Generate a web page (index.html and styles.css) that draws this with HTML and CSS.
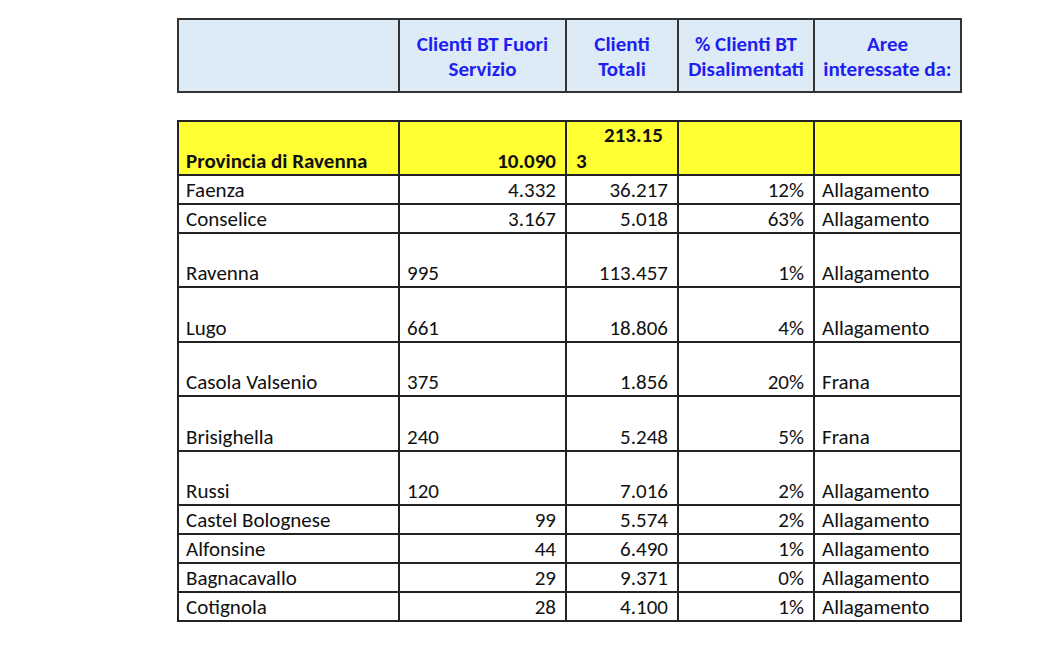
FILE: index.html
```html
<!DOCTYPE html>
<html lang="it">
<head>
<meta charset="utf-8">
<title>Clienti BT</title>
<link rel="stylesheet" href="styles.css">
</head>
<body>
<div class="page">
  <table class="grid head">
    <colgroup>
      <col class="c1"><col class="c2"><col class="c3"><col class="c4"><col class="c5">
    </colgroup>
    <tr>
      <th></th>
      <th>Clienti BT Fuori<br>Servizio</th>
      <th>Clienti<br>Totali</th>
      <th>% Clienti BT<br>Disalimentati</th>
      <th>Aree<br>interessate da:</th>
    </tr>
  </table>

  <table class="grid body">
    <colgroup>
      <col class="c1"><col class="c2"><col class="c3"><col class="c4"><col class="c5">
    </colgroup>
    <tr class="prov">
      <td class="b">Provincia di Ravenna</td>
      <td class="r b">10.090</td>
      <td class="b wrap">213.15<br>3</td>
      <td></td>
      <td></td>
    </tr>
    <tr class="short"><td>Faenza</td><td class="r">4.332</td><td class="r">36.217</td><td class="r">12%</td><td>Allagamento</td></tr>
    <tr class="short"><td>Conselice</td><td class="r">3.167</td><td class="r">5.018</td><td class="r">63%</td><td>Allagamento</td></tr>
    <tr class="tall"><td>Ravenna</td><td>995</td><td class="r">113.457</td><td class="r">1%</td><td>Allagamento</td></tr>
    <tr class="tall"><td>Lugo</td><td>661</td><td class="r">18.806</td><td class="r">4%</td><td>Allagamento</td></tr>
    <tr class="tall"><td>Casola Valsenio</td><td>375</td><td class="r">1.856</td><td class="r">20%</td><td>Frana</td></tr>
    <tr class="tall"><td>Brisighella</td><td>240</td><td class="r">5.248</td><td class="r">5%</td><td>Frana</td></tr>
    <tr class="tall"><td>Russi</td><td>120</td><td class="r">7.016</td><td class="r">2%</td><td>Allagamento</td></tr>
    <tr class="short"><td>Castel Bolognese</td><td class="r">99</td><td class="r">5.574</td><td class="r">2%</td><td>Allagamento</td></tr>
    <tr class="short"><td>Alfonsine</td><td class="r">44</td><td class="r">6.490</td><td class="r">1%</td><td>Allagamento</td></tr>
    <tr class="short"><td>Bagnacavallo</td><td class="r">29</td><td class="r">9.371</td><td class="r">0%</td><td>Allagamento</td></tr>
    <tr class="short"><td>Cotignola</td><td class="r">28</td><td class="r">4.100</td><td class="r">1%</td><td>Allagamento</td></tr>
  </table>
</div>
</body>
</html>
```

FILE: styles.css
```css
html, body {
  margin: 0;
  padding: 0;
  background: #ffffff;
}

.page {
  padding: 18px 0 0 177px;
  font-family: "Carlito", "Lato", "Liberation Sans", sans-serif;
  font-size: 21px;
  color: #111111;
}

.grid {
  border-collapse: collapse;
  table-layout: fixed;
  width: 783px;
}

.c1 { width: 221px; }
.c2 { width: 167px; }
.c3 { width: 112px; }
.c4 { width: 136px; }
.c5 { width: 147px; }

.grid th,
.grid td {
  border: 2px solid #222222;
  padding: 0 8px 0 7px;
  vertical-align: bottom;
  line-height: 25px;
  white-space: nowrap;
}

.head {
  margin-bottom: 27px;
}

.head th {
  background: #ddebf7;
  color: #1f1ff0;
  font-weight: bold;
  text-align: center;
  height: 68px;
  vertical-align: middle;
  padding: 3px 4px 0 4px;
  border-color: #333333;
}

.body td.r {
  text-align: right;
  padding-right: 9px;
}

.body .b {
  font-weight: bold;
}

.prov td {
  background: #ffff33;
  height: 52px;
}

.prov td.wrap {
  line-height: 26px;
  padding-left: 9px;
  text-indent: 28px;
}

.tall td {
  height: 52.4px;
}

.short td {
  height: 27px;
}
```
